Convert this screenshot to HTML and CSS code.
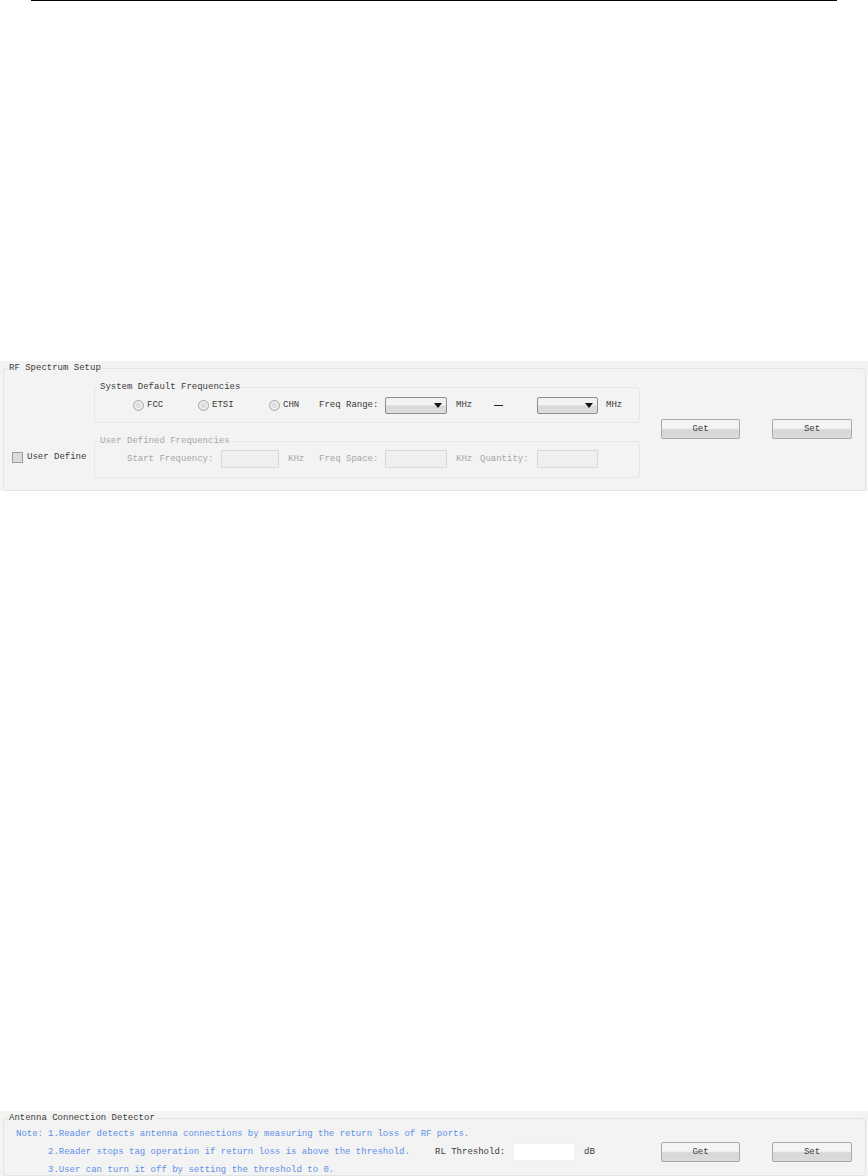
FILE: index.html
```html
<!DOCTYPE html>
<html lang="en">
<head>
  <meta charset="UTF-8" />
  <title>Reader Setup</title>
  <link rel="stylesheet" href="styles.css">
</head>
<body>
  <div class="top-rule"></div>

  <div class="shot shot-spectrum">
    <fieldset class="panel">
      <legend>RF Spectrum Setup</legend>
      <div class="spectrum">
        <label class="check"><span class="check-box"></span>User Define</label>
        <div class="groups">
          <fieldset class="group">
            <legend>System Default Frequencies</legend>
            <div class="row row-default">
              <span></span>
              <label class="radio"><span class="radio-dot"></span>FCC</label>
              <label class="radio"><span class="radio-dot"></span>ETSI</label>
              <label class="radio"><span class="radio-dot"></span>CHN</label>
              <span>Freq Range:</span>
              <span class="combo"></span>
              <span class="unit">MHz</span>
              <span class="dash"></span>
              <span class="combo"></span>
              <span class="unit-end">MHz</span>
            </div>
          </fieldset>
          <fieldset class="group group-off">
            <legend>User Defined Frequencies</legend>
            <div class="row row-user">
              <span></span>
              <span>Start Frequency:</span>
              <span class="field"></span>
              <span class="unit">KHz</span>
              <span>Freq Space:</span>
              <span class="field"></span>
              <span class="unit">KHz</span>
              <span>Quantity:</span>
              <span class="field"></span>
            </div>
          </fieldset>
        </div>
        <div class="actions">
          <button class="btn">Get</button>
          <button class="btn">Set</button>
        </div>
      </div>
    </fieldset>
  </div>

  <div class="shot shot-antenna">
    <fieldset class="panel">
      <legend class="legend-dark">Antenna Connection Detector</legend>
      <div class="antenna">
        <span class="note note-head">Note:</span>
        <span class="note note-first">1.Reader detects antenna connections by measuring the return loss of RF ports.</span>
        <span class="note note-second">2.Reader stops tag operation if return loss is above the threshold.</span>
        <span class="threshold">RL Threshold:</span>
        <span class="field field-on"></span>
        <span class="db">dB</span>
        <div class="actions actions-low">
          <button class="btn">Get</button>
          <button class="btn">Set</button>
        </div>
        <span class="note note-third">3.User can turn it off by setting the threshold to 0.</span>
      </div>
    </fieldset>
  </div>
</body>
</html>
```

FILE: styles.css
```css
* { box-sizing: border-box; }

body {
  margin: 0;
  background: #fff;
  color: #3a3a3a;
  font-family: "Liberation Mono", monospace;
  font-size: 9px;
  line-height: 12px;
}

.top-rule {
  height: 1px;
  margin: 0 31px 0 31px;
  background: #000;
}

.shot {
  background: #f3f3f3;
  padding: 1px 2px 0 3px;
}

.shot-spectrum {
  height: 130px;
  margin-top: 360px;
}

.shot-antenna {
  height: 65px;
  margin-top: 620px;
}

fieldset {
  margin: 0;
  min-width: 0;
}

legend {
  padding: 0 1px;
  height: 12px;
}

.panel {
  height: 100%;
  padding: 0;
  border: 1px solid #e0e4e4;
  border-radius: 3px;
}

.panel > legend {
  margin-left: 4px;
}

.spectrum {
  display: flex;
  align-items: flex-start;
  height: 116px;
}

.check {
  display: flex;
  align-items: center;
  width: 90px;
  margin-top: 77px;
  padding-left: 8px;
}

.check-box {
  width: 11px;
  height: 11px;
  margin-right: 4px;
  border: 1px solid #9c9c9c;
  background: #dcdcdc;
}

.groups {
  display: flex;
  flex-direction: column;
  gap: 12px;
  width: 546px;
  margin-top: 7px;
}

.group {
  height: 42px;
  padding: 0;
  border: 1px solid #e6e8e8;
  border-radius: 3px;
}

.group > legend {
  margin-left: 4px;
}

.group-off {
  height: 43px;
  color: #a6a6a6;
}

.row {
  display: grid;
  align-items: center;
  height: 18px;
  margin-top: 3px;
}

.row-default {
  grid-template-columns: 38px 65px 71px 50px 66px 62px 47px 43px 61px 1fr;
}

.row-user {
  grid-template-columns: 32px 94px 58px 40px 66px 62px 33px 57px 61px;
}

.radio {
  display: flex;
  align-items: center;
}

.radio-dot {
  width: 11px;
  height: 11px;
  margin-right: 3px;
  border: 1px solid #a8a8a8;
  border-radius: 50%;
  background: #dcdcdc;
  box-shadow: inset 0 0 0 2px #ececec;
}

.combo {
  height: 17px;
  position: relative;
  border: 1px solid #8d8d8d;
  border-radius: 2px;
  background: linear-gradient(#f1f1f1 45%, #d8d8d8 55%, #dedede);
}

.combo::after {
  content: "";
  position: absolute;
  right: 4px;
  top: 5px;
  border-top: 5px solid #111;
  border-left: 4px solid transparent;
  border-right: 4px solid transparent;
}

.unit { padding-left: 9px; }
.unit-end { padding-left: 8px; }

.dash {
  width: 9px;
  height: 1px;
  background: #222;
}

.field {
  height: 18px;
  border: 1px solid #d8d8d8;
  border-radius: 1px;
  background: #efefef;
}

.field-on {
  border-color: #eef0f2;
  background: #fff;
}

.actions {
  display: flex;
  gap: 32px;
  margin: 45px 0 0 21px;
}

.actions-low {
  margin: 0;
  grid-column: 6;
  grid-row: 2;
}

.btn {
  width: 80px;
  height: 20px;
  padding: 0;
  border: 1px solid #a8a8a8;
  border-radius: 2px;
  background: linear-gradient(#f4f4f4 45%, #d6d6d6 55%, #dcdcdc);
  color: #3a3a3a;
  font: inherit;
}

.btn:first-child { width: 79px; }

.antenna {
  display: grid;
  grid-template-columns: 32px 387px 78px 62px 86px 1fr;
  grid-template-rows: 18px 18px 18px;
  align-items: center;
  margin-top: 1px;
  padding-left: 12px;
}

.note { color: #5c8fe8; }

.note-first { grid-column: 2 / 7; }
.note-second { grid-column: 2; grid-row: 2; }
.note-third { grid-column: 2 / 7; grid-row: 3; }

.threshold { grid-column: 3; grid-row: 2; }
.field-on { grid-column: 4; grid-row: 2; }

.db {
  grid-column: 5;
  grid-row: 2;
  padding-left: 9px;
}
```
